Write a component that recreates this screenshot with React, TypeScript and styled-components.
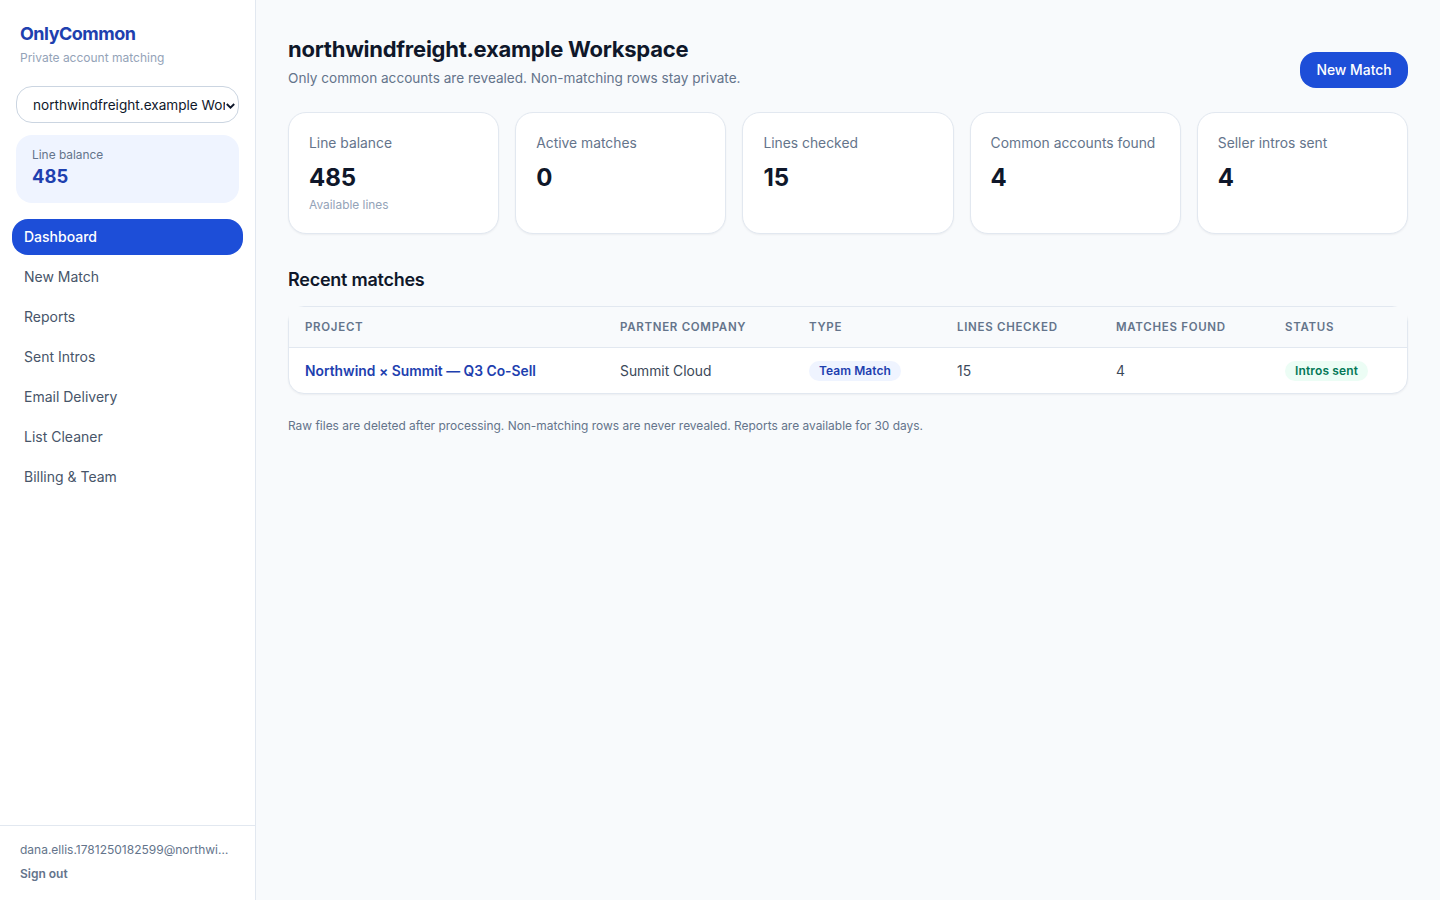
import React from "react";
import styled, { createGlobalStyle } from "styled-components";

const GlobalStyle = createGlobalStyle`
  * { box-sizing: border-box; }
  html, body { margin: 0; padding: 0; height: 100%; }
  body {
    background: #f8fafc;
    color: #0f172a;
    font-family: Inter, "Liberation Sans", sans-serif;
    font-size: 14px;
    font-optical-sizing: none;
    font-feature-settings: "calt" 0;
    -webkit-font-smoothing: antialiased;
  }
`;

const Shell = styled.div`
  display: flex;
  min-height: 100vh;
`;

const Sidebar = styled.aside`
  width: 256px;
  flex-shrink: 0;
  height: 100vh;
  display: flex;
  flex-direction: column;
  background: #fff;
  border-right: 1px solid #e2e8f0;
`;

const Brand = styled.div`
  padding: 24px 20px 0;
`;

const Logo = styled.div`
  font-size: 18px;
  line-height: 20px;
  font-weight: 700;
  letter-spacing: -0.5px;
  color: #1e40af;
`;

const Tagline = styled.div`
  margin-top: 6px;
  font-size: 12px;
  line-height: 16px;
  color: #94a3b8;
`;

const WorkspaceBlock = styled.div`
  position: relative;
  margin: 20px 16px 0;
`;

const WorkspaceSelect = styled.select`
  display: block;
  width: 100%;
  height: 37px;
  padding: 8px 13px 8px 16px;
  appearance: none;
  background: #fff;
  border: 1px solid #cbd5e1;
  border-radius: 16px;
  color: #0f172a;
  font-family: inherit;
  font-size: 13.6px;
`;

const SelectChevron = styled.svg`
  position: absolute;
  top: 17px;
  right: 4px;
  width: 9px;
  height: 6px;
  pointer-events: none;
`;

const BalanceCard = styled.div`
  margin: 12px 16px 0;
  height: 68px;
  padding: 12px 16px;
  background: #eff4ff;
  border-radius: 16px;
`;

const BalanceLabel = styled.div`
  font-size: 11.9px;
  line-height: 16px;
  color: #64748b;
`;

const BalanceValue = styled.div`
  font-size: 18.4px;
  line-height: 26px;
  font-weight: 700;
  color: #1e40af;
`;

const Nav = styled.nav`
  flex: 1;
  display: flex;
  flex-direction: column;
  gap: 4px;
  padding: 16px 12px;
`;

const NavItem = styled.a<{ $active?: boolean }>`
  display: block;
  height: 36px;
  padding: 0 12px;
  border-radius: 16px;
  font-size: 14px;
  line-height: 36px;
  font-weight: ${(p) => (p.$active ? 500 : 400)};
  color: ${(p) => (p.$active ? "#fff" : "#475569")};
  background: ${(p) => (p.$active ? "#1d4ed8" : "transparent")};
  text-decoration: none;
`;

const SidebarFooter = styled.div`
  padding: 16px 20px 18px;
  border-top: 1px solid #e2e8f0;
`;

const UserEmail = styled.div`
  font-size: 12px;
  line-height: 16px;
  color: #64748b;
  white-space: nowrap;
  overflow: hidden;
  text-overflow: ellipsis;
`;

const SignOut = styled.button`
  display: block;
  margin-top: 8px;
  padding: 0;
  border: 0;
  background: none;
  font-family: inherit;
  font-size: 12px;
  line-height: 16px;
  font-weight: 600;
  color: #64748b;
`;

const Main = styled.main`
  flex: 1;
  min-width: 0;
  padding: 32px;
`;

const PageHeader = styled.header`
  display: flex;
  align-items: flex-end;
  justify-content: space-between;
  margin-bottom: 24px;
`;

const Title = styled.h1`
  margin: 0;
  padding-top: 2px;
  font-size: 22px;
  line-height: 30px;
  font-weight: 700;
  letter-spacing: -0.25px;
  color: #0f172a;
`;

const Subtitle = styled.p`
  margin: 4px 0 0;
  font-size: 13.6px;
  line-height: 20px;
  color: #64748b;
`;

const PrimaryButton = styled.button`
  width: 108px;
  height: 36px;
  padding: 0 0 1px;
  border: 0;
  border-radius: 16px;
  background: #1d4ed8;
  color: #fff;
  font-family: inherit;
  font-size: 13.9px;
  font-weight: 500;
`;

const StatGrid = styled.section`
  display: grid;
  grid-template-columns: repeat(5, 1fr);
  gap: 16px;
`;

const StatCard = styled.div`
  height: 122px;
  padding: 20px;
  background: #fff;
  border: 1px solid #e2e8f0;
  border-radius: 18px;
  box-shadow: 0 1px 2px rgba(15, 23, 42, 0.05);
`;

const StatLabel = styled.div`
  font-size: 13.85px;
  line-height: 20px;
  color: #64748b;
`;

const StatValue = styled.div`
  margin-top: 9px;
  font-size: 24px;
  line-height: 32px;
  font-weight: 700;
  color: #0f172a;
`;

const StatHint = styled.div`
  margin-top: 3px;
  font-size: 11.9px;
  line-height: 16px;
  color: #94a3b8;
`;

const SectionTitle = styled.h2`
  margin: 32px 0 12px;
  font-size: 18px;
  line-height: 28px;
  font-weight: 600;
  letter-spacing: -0.25px;
  color: #0f172a;
`;

const TableCard = styled.div`
  background: #fff;
  border: 1px solid #e2e8f0;
  border-radius: 16px;
  box-shadow: 0 1px 2px rgba(15, 23, 42, 0.05);
`;

const Table = styled.table`
  width: 100%;
  border-collapse: collapse;
`;

const Th = styled.th<{ $width: number }>`
  width: ${(p) => p.$width}px;
  height: 40px;
  padding: 0 16px;
  background: #f8fafc;
  border-bottom: 1px solid #e2e8f0;
  text-align: left;
  font-size: 11.5px;
  font-weight: 600;
  letter-spacing: 0.7px;
  text-transform: uppercase;
  color: #64748b;
`;

const Td = styled.td`
  height: 46px;
  padding: 1px 16px 0;
  font-size: 13.85px;
  color: #3b4859;
`;

const ProjectLink = styled.a`
  font-weight: 600;
  color: #1e40af;
  text-decoration: none;
`;

const Pill = styled.span<{ $tone: "blue" | "green" }>`
  display: inline-block;
  vertical-align: middle;
  padding: 0 10px;
  border-radius: 999px;
  font-size: 12px;
  line-height: 20px;
  font-weight: 600;
  letter-spacing: ${(p) => (p.$tone === "blue" ? "0.05px" : "0.15px")};
  color: ${(p) => (p.$tone === "blue" ? "#1e40af" : "#047857")};
  background: ${(p) => (p.$tone === "blue" ? "#eff4ff" : "#ecfdf5")};
`;

const Footnote = styled.p`
  margin: 24px 0 0;
  font-size: 11.94px;
  line-height: 16px;
  color: #64748b;
`;

const navItems = ["Dashboard", "New Match", "Reports", "Sent Intros", "Email Delivery", "List Cleaner", "Billing & Team"];

const stats = [
  { label: "Line balance", value: "485", hint: "Available lines" },
  { label: "Active matches", value: "0" },
  { label: "Lines checked", value: "15" },
  { label: "Common accounts found", value: "4" },
  { label: "Seller intros sent", value: "4" },
];

const columns = [
  { name: "Project", width: 315 },
  { name: "Partner company", width: 189 },
  { name: "Type", width: 148 },
  { name: "Lines checked", width: 159 },
  { name: "Matches found", width: 169 },
  { name: "Status", width: 138 },
];

export default function App() {
  return (
    <Shell>
      <GlobalStyle />
      <Sidebar>
        <Brand>
          <Logo>OnlyCommon</Logo>
          <Tagline>Private account matching</Tagline>
        </Brand>
        <WorkspaceBlock>
          <WorkspaceSelect defaultValue="northwind">
            <option value="northwind">northwindfreight.example Workspace</option>
          </WorkspaceSelect>
          <SelectChevron viewBox="0 0 9 6" fill="none" stroke="#0f172a" strokeWidth="1.9">
            <path d="M0.8 1 L4.5 4.6 L8.2 1" />
          </SelectChevron>
        </WorkspaceBlock>
        <BalanceCard>
          <BalanceLabel>Line balance</BalanceLabel>
          <BalanceValue>485</BalanceValue>
        </BalanceCard>
        <Nav>
          {navItems.map((item, i) => (
            <NavItem key={item} href="#" $active={i === 0}>
              {item}
            </NavItem>
          ))}
        </Nav>
        <SidebarFooter>
          <UserEmail>dana.ellis.1781250182599@northwindfreight.example</UserEmail>
          <SignOut>Sign out</SignOut>
        </SidebarFooter>
      </Sidebar>
      <Main>
        <PageHeader>
          <div>
            <Title>northwindfreight.example Workspace</Title>
            <Subtitle>Only common accounts are revealed. Non-matching rows stay private.</Subtitle>
          </div>
          <PrimaryButton>New Match</PrimaryButton>
        </PageHeader>
        <StatGrid>
          {stats.map((s) => (
            <StatCard key={s.label}>
              <StatLabel>{s.label}</StatLabel>
              <StatValue>{s.value}</StatValue>
              {s.hint && <StatHint>{s.hint}</StatHint>}
            </StatCard>
          ))}
        </StatGrid>
        <SectionTitle>Recent matches</SectionTitle>
        <TableCard>
          <Table>
            <thead>
              <tr>
                {columns.map((c) => (
                  <Th key={c.name} $width={c.width}>
                    {c.name}
                  </Th>
                ))}
              </tr>
            </thead>
            <tbody>
              <tr>
                <Td>
                  <ProjectLink href="#">Northwind × Summit — Q3 Co-Sell</ProjectLink>
                </Td>
                <Td>Summit Cloud</Td>
                <Td>
                  <Pill $tone="blue">Team Match</Pill>
                </Td>
                <Td>15</Td>
                <Td>4</Td>
                <Td>
                  <Pill $tone="green">Intros sent</Pill>
                </Td>
              </tr>
            </tbody>
          </Table>
        </TableCard>
        <Footnote>Raw files are deleted after processing. Non-matching rows are never revealed. Reports are available for 30 days.</Footnote>
      </Main>
    </Shell>
  );
}
